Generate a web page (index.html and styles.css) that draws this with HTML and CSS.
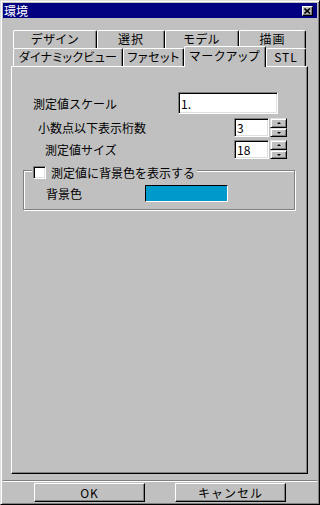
FILE: index.html
```html
<!DOCTYPE html>
<html lang="ja">
<head>
    <meta charset="UTF-8">
    <title>環境</title>
    <link rel="stylesheet" href="styles.css">
</head>
<body>
    <div class="window">
        <div class="titlebar">
            <span class="title">環境</span>
            <span class="close-btn">
                <svg width="7" height="6" viewBox="0 0 7 6">
                    <path d="M0.5 0.5 L6 5.5 M6 0.5 L0.5 5.5" stroke="#000" stroke-width="1.6" fill="none"/>
                </svg>
            </span>
        </div>

        <div class="tabs">
            <div class="tab-row">
                <div class="tab tab-design">デザイン</div>
                <div class="tab tab-select">選択</div>
                <div class="tab tab-model">モデル</div>
                <div class="tab tab-draw">描画</div>
            </div>
            <div class="tab-row">
                <div class="tab tab-dynamic">ダイナミックビュー</div>
                <div class="tab tab-facet">ファセット</div>
                <div class="tab tab-markup selected">マークアップ</div>
                <div class="tab tab-stl">STL</div>
            </div>
        </div>

        <div class="panel">
            <div class="row row-scale">
                <span class="label">測定値スケール</span>
                <div class="field field-wide">1.</div>
            </div>
            <div class="row row-digits">
                <span class="label">小数点以下表示桁数</span>
                <div class="field field-narrow">3</div>
                <div class="spinner">
                    <span class="spin up"></span>
                    <span class="spin down"></span>
                </div>
            </div>
            <div class="row row-size">
                <span class="label">測定値サイズ</span>
                <div class="field field-narrow">18</div>
                <div class="spinner">
                    <span class="spin up"></span>
                    <span class="spin down"></span>
                </div>
            </div>

            <div class="group">
                <div class="legend">
                    <span class="checkbox"></span>
                    <span>測定値に背景色を表示する</span>
                </div>
                <div class="group-row">
                    <span class="label">背景色</span>
                    <span class="swatch"></span>
                </div>
            </div>
        </div>

        <div class="separator"></div>

        <div class="buttons">
            <button class="btn">OK</button>
            <button class="btn">キャンセル</button>
        </div>
    </div>
</body>
</html>
```

FILE: styles.css
```css
body {
    margin: 0;
    background-color: #c0c0c0;
    font-family: "Noto Sans CJK JP", "Noto Sans", sans-serif;
    font-size: 12px;
    color: #000;
}
.window {
    width: 320px;
    height: 505px;
    box-sizing: border-box;
    border: 1px solid;
    border-color: #dfdfdf #000 #000 #dfdfdf;
    box-shadow: inset 1px 1px #fff, inset -1px -1px #808080;
    padding: 2px;
    background-color: #c0c0c0;
}
.titlebar {
    height: 15px;
    background-color: #000080;
    color: #fff;
    display: flex;
    align-items: center;
    padding-left: 1px;
    line-height: 15px;
}
.close-btn {
    margin-left: auto;
    margin-right: 4px;
    width: 11px;
    height: 10px;
    box-sizing: border-box;
    background-color: #c0c0c0;
    border: 1px solid;
    border-color: #fff #000 #000 #fff;
    box-shadow: inset -1px -1px #808080;
    display: flex;
    align-items: center;
    justify-content: center;
}
.close-btn svg {
    display: block;
}

/* tabs */
.tabs {
    margin: 12px 9px 0 8px;
}
.tab-row {
    display: flex;
    height: 18px;
    padding-left: 2px;
}
.tab {
    box-sizing: border-box;
    height: 18px;
    border-top: 1px solid #fff;
    border-left: 1px solid #fff;
    border-right: 1px solid #000;
    border-radius: 2px 2px 0 0;
    box-shadow: inset -1px 0 #808080;
    text-align: center;
    line-height: 16px;
    white-space: nowrap;
    overflow: hidden;
    font-feature-settings: "palt";
    letter-spacing: 1px;
}
.tab-design { width: 84px; }
.tab-select { width: 68px; }
.tab-model { width: 74px; }
.tab-draw { width: 67px; }
.tab-dynamic { width: 110px; letter-spacing: 0.3px; }
.tab-facet { width: 61px; letter-spacing: 0.5px; }
.tab-markup { width: 82px; }
.tab-stl { width: 40px; }
.tab.selected {
    position: relative;
    z-index: 1;
    margin-top: -2px;
    height: 21px;
    background-color: #c0c0c0;
    line-height: 17px;
}

/* panel */
.panel {
    box-sizing: border-box;
    height: 408px;
    margin: 0 9px 0 8px;
    border: 1px solid;
    border-color: #fff #000 #000 #fff;
    box-shadow: inset -1px -1px #808080;
    padding-top: 25px;
}
.row {
    display: flex;
    align-items: center;
}
.row .label {
    flex: 1;
    white-space: nowrap;
}
.row-scale {
    height: 22px;
    padding-left: 21px;
    margin-right: 29px;
}
.row-digits {
    height: 19px;
    margin-top: 4px;
    padding-left: 26px;
    margin-right: 20px;
}
.row-size {
    height: 19px;
    margin-top: 3px;
    padding-left: 33px;
    margin-right: 20px;
}
.field {
    box-sizing: border-box;
    background-color: #fff;
    border: 1px solid;
    border-color: #808080 #fff #fff #808080;
    box-shadow: inset 1px 1px #000, inset -1px -1px #dfdfdf;
    padding-left: 2px;
    display: flex;
    align-items: center;
}
.field-wide {
    width: 100px;
    height: 22px;
}
.field-narrow {
    width: 35px;
    height: 19px;
}
.spinner {
    margin-left: 1px;
    width: 17px;
    height: 19px;
    display: flex;
    flex-direction: column;
}
.spin {
    box-sizing: border-box;
    height: 9px;
    border: 1px solid;
    border-color: #dfdfdf #000 #000 #dfdfdf;
    box-shadow: inset 1px 1px #fff, inset -1px -1px #808080;
    display: flex;
    align-items: center;
    justify-content: center;
}
.spin.up {
    height: 10px;
}
.spin::after {
    content: "";
    border-left: 2px solid transparent;
    border-right: 2px solid transparent;
}
.spin.up::after {
    border-bottom: 2px solid #000;
}
.spin.down::after {
    border-top: 2px solid #000;
}

/* group box */
.group {
    box-sizing: border-box;
    width: 272px;
    height: 40px;
    margin: 11px 0 0 11px;
    border: 1px solid #808080;
    box-shadow: inset 1px 1px #fff, 1px 1px #fff;
}
.legend {
    display: flex;
    align-items: center;
    width: fit-content;
    height: 13px;
    margin: -5px 0 0 8px;
    padding: 0 2px 0 1px;
    background-color: #c0c0c0;
    white-space: nowrap;
}
.checkbox {
    box-sizing: border-box;
    width: 13px;
    height: 13px;
    margin-right: 5px;
    background-color: #fff;
    border: 1px solid;
    border-color: #808080 #fff #fff #808080;
    box-shadow: inset 1px 1px #000, inset -1px -1px #dfdfdf;
}
.group-row {
    display: flex;
    align-items: center;
    height: 17px;
    margin-top: 6px;
}
.group-row .label {
    box-sizing: border-box;
    width: 121px;
    padding-left: 22px;
}
.swatch {
    box-sizing: border-box;
    width: 83px;
    height: 17px;
    border: 1px solid;
    border-color: #000 #fff #fff #000;
    background-color: #0099cc;
}

/* bottom buttons */
.separator {
    margin-top: 6px;
    border-top: 1px solid #808080;
    border-bottom: 1px solid #fff;
}
.buttons {
    display: flex;
    gap: 30px;
    margin-top: 1px;
    padding-left: 31px;
}
.btn {
    box-sizing: border-box;
    width: 111px;
    height: 19px;
    padding: 0;
    font-family: inherit;
    font-size: 12px;
    color: #000;
    background-color: #c0c0c0;
    border: 1px solid;
    border-color: #fff #000 #000 #fff;
    box-shadow: inset -1px -1px #808080;
    line-height: 16px;
    letter-spacing: 1px;
}
```
